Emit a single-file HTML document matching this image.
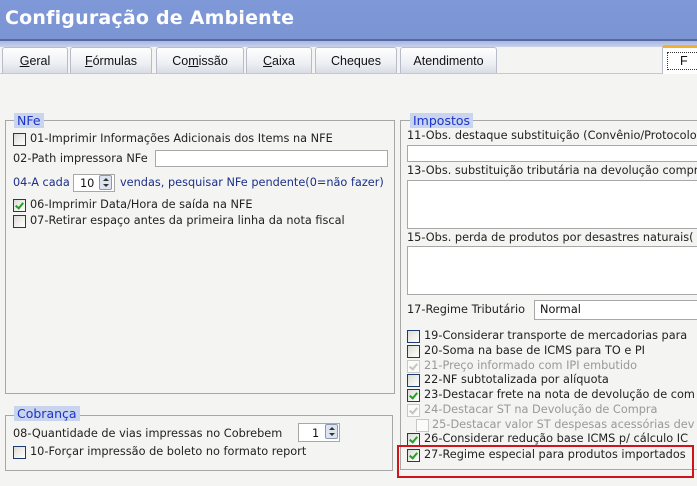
<!DOCTYPE html>
<html><head><meta charset="utf-8"><style>
*{margin:0;padding:0;box-sizing:border-box}
body{width:697px;height:486px;overflow:hidden;background:#f4f4f2;font-family:"DejaVu Sans","Liberation Sans",sans-serif;font-size:11.3px;color:#222;position:relative}
.a{position:absolute;white-space:nowrap}
#title{left:0;top:0;width:697px;height:40px;background:linear-gradient(#7f98d8,#7b94d2);}
#title span{position:absolute;left:5px;top:7px;color:#fff;font:bold 19px "DejaVu Sans",sans-serif;letter-spacing:0.2px}
#band{left:0;top:39px;width:697px;height:8px;background:linear-gradient(#56699e 0,#56699e 2px,#a9b7df 2px,#c9d2ec 8px)}
.tab{position:absolute;top:47px;height:26px;border:1px solid #b8bcc8;border-bottom:none;border-radius:3px 3px 0 0;background:linear-gradient(#fff,#eef0f4 60%,#d9dce4);text-align:center;font-family:"Liberation Sans",sans-serif;font-size:12.5px;line-height:27px;color:#111}
.g{position:absolute;border:1px solid #a7a7a7}
.leg{position:absolute;background:#c9d4ee;color:#1c33c8;padding:0 3px;font-size:12.5px;line-height:15px;height:15px}
.cb{position:absolute;width:13px;height:13px;border:1px solid #1c3a6e;background:linear-gradient(135deg,#dcdcd6,#fff)}
.cb.k::after{content:"";position:absolute;left:3px;top:1px;width:3px;height:6px;border:solid #21a121;border-width:0 2px 2px 0;transform:rotate(40deg)}
.cb.d{border-color:#c8c8c4;background:#fbfbf9}
.cb.d::after{border-color:#c4c4c0}
.in{position:absolute;border:1px solid #a8a8a8;background:#fff}
.gr{color:#999}
.bl{color:#1c2f8a}
.sp{position:absolute;width:13px;height:15px;border:1px solid #8a98b8;background:#dde3ef;border-radius:2px}
.sp::before{content:"";position:absolute;left:3px;top:2px;border:3px solid transparent;border-bottom:3px solid #333;border-top:0}
.sp::after{content:"";position:absolute;left:3px;top:8px;border:3px solid transparent;border-top:3px solid #333;border-bottom:0}
</style></head><body>
<div class="a" id="title"><span>Configuração de Ambiente</span></div>
<div class="a" id="band"></div>
<div class="tab" style="left:2px;width:66px"><u>G</u>eral</div>
<div class="tab" style="left:70px;width:82px"><u>F</u>órmulas</div>
<div class="tab" style="left:156px;width:88px">Co<u>m</u>issão</div>
<div class="tab" style="left:246px;width:66px"><u>C</u>aixa</div>
<div class="tab" style="left:315px;width:82px">Cheques</div>
<div class="tab" style="left:400px;width:97px">Atendimento</div>
<div class="tab" style="left:662px;width:50px;top:45px;height:29px;border-top:3px solid #f0b030;background:#fff;text-align:left;padding-left:4px"><span style="border:1px dotted #333;display:inline-block;width:50px;height:18px;line-height:16px;margin-top:2px;padding-left:12px">F</span></div>
<div class="a" style="left:0;top:73px;width:662px;height:1px;background:#c8c8c8"></div>

<!-- NFe -->
<div class="g" style="left:5px;top:120px;width:390px;height:274px"></div>
<div class="leg" style="left:14px;top:113px">NFe</div>
<div class="cb" style="left:13px;top:133px"></div><div class="a" style="left:30px;top:132px">01-Imprimir Informações Adicionais dos Items na NFE</div>
<div class="a" style="left:13px;top:152px">02-Path impressora NFe</div><div class="in" style="left:155px;top:150px;width:233px;height:17px"></div>
<div class="a bl" style="left:13px;top:176px">04-A cada</div><div class="in" style="left:73px;top:174px;width:42px;height:18px"><span class="a" style="left:6px;top:2px;color:#111">10</span></div><div class="sp" style="left:99px;top:175px"></div>
<div class="a bl" style="left:120px;top:176px">vendas, pesquisar NFe pendente(0=não fazer)</div>
<div class="cb k" style="left:13px;top:199px"></div><div class="a" style="left:30px;top:198px">06-Imprimir Data/Hora de saída na NFE</div>
<div class="cb" style="left:13px;top:215px"></div><div class="a" style="left:30px;top:214px">07-Retirar espaço antes da primeira linha da nota fiscal</div>

<!-- Cobrança -->
<div class="g" style="left:5px;top:415px;width:388px;height:56px"></div>
<div class="leg" style="left:14px;top:406px">Cobrança</div>
<div class="a" style="left:13px;top:427px">08-Quantidade de vias impressas no Cobrebem</div>
<div class="in" style="left:298px;top:423px;width:42px;height:19px"><span class="a" style="left:13px;top:3px;color:#111">1</span></div><div class="sp" style="left:325px;top:424px"></div>
<div class="cb" style="left:13px;top:446px"></div><div class="a" style="left:30px;top:445px">10-Forçar impressão de boleto no formato report</div>

<!-- Impostos -->
<div class="g" style="left:400px;top:120px;width:310px;height:350px"></div>
<div class="leg" style="left:410px;top:113px">Impostos</div>
<div class="a" style="left:407px;top:129px">11-Obs. destaque substituição (Convênio/Protocolo</div>
<div class="in" style="left:407px;top:145px;width:300px;height:17px"></div>
<div class="a" style="left:407px;top:164px">13-Obs. substituição tributária na devolução compr</div>
<div class="in" style="left:407px;top:180px;width:300px;height:49px"></div>
<div class="a" style="left:407px;top:231px">15-Obs. perda de produtos por desastres naturais(</div>
<div class="in" style="left:407px;top:246px;width:300px;height:49px"></div>
<div class="a" style="left:407px;top:303px">17-Regime Tributário</div>
<div class="in" style="left:534px;top:300px;width:170px;height:20px"><span class="a" style="left:5px;top:2px;color:#111">Normal</span></div>
<div class="cb" style="left:407px;top:330px"></div><div class="a" style="left:424px;top:329px">19-Considerar transporte de mercadorias para</div>
<div class="cb" style="left:407px;top:345px"></div><div class="a" style="left:424px;top:344px">20-Soma na base de ICMS para TO e PI</div>
<div class="cb k d" style="left:407px;top:360px"></div><div class="a gr" style="left:424px;top:359px">21-Preço informado com IPI embutido</div>
<div class="cb" style="left:407px;top:374px"></div><div class="a" style="left:424px;top:373px">22-NF subtotalizada por alíquota</div>
<div class="cb k" style="left:407px;top:389px"></div><div class="a" style="left:424px;top:388px">23-Destacar frete na nota de devolução de com</div>
<div class="cb k d" style="left:407px;top:404px"></div><div class="a gr" style="left:424px;top:403px">24-Destacar ST na Devolução de Compra</div>
<div class="cb d" style="left:416px;top:419px"></div><div class="a gr" style="left:432px;top:418px">25-Destacar valor ST despesas acessórias dev</div>
<div class="cb k" style="left:407px;top:433px"></div><div class="a" style="left:424px;top:432px">26-Considerar redução base ICMS p/ cálculo IC</div>
<div class="cb k" style="left:407px;top:449px"></div><div class="a" style="left:424px;top:448px">27-Regime especial para produtos importados</div>
<div class="a" style="left:397px;top:445px;width:297px;height:33px;border:2px solid #d0141c"></div>
</body></html>
